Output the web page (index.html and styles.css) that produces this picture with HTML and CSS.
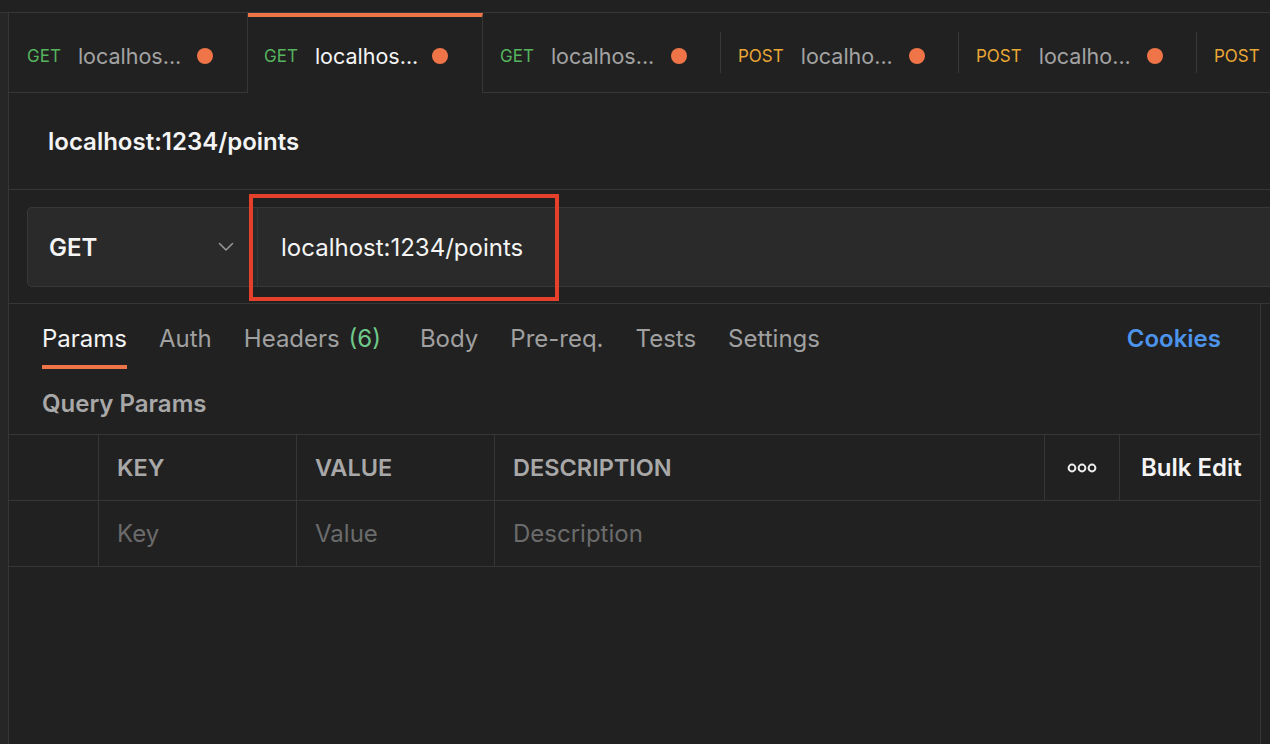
FILE: index.html
```html
<!DOCTYPE html>
<html lang="en">
<head>
<meta charset="utf-8">
<title>Postman request</title>
<link rel="stylesheet" href="styles.css">
</head>
<body>
<div class="topstrip"></div>
<div class="app">
  <div class="gutter"></div>
  <div class="main">
    <div class="tabs">
      <div class="tab tab-first"><span class="method get">GET</span><span class="name">localhos...</span><span class="dot"></span></div>
      <div class="tab active"><span class="method get">GET</span><span class="name">localhos...</span><span class="dot"></span></div>
      <div class="tab"><span class="method get">GET</span><span class="name">localhos...</span><span class="dot"></span></div>
      <span class="divider"></span>
      <div class="tab"><span class="method post">POST</span><span class="name">localho...</span><span class="dot"></span></div>
      <span class="divider"></span>
      <div class="tab"><span class="method post">POST</span><span class="name">localho...</span><span class="dot"></span></div>
      <span class="divider"></span>
      <div class="tab"><span class="method post">POST</span><span class="name">localho...</span><span class="dot"></span></div>
      <div class="tab-fill"></div>
    </div>

    <div class="title-bar"><h1 class="title">localhost:1234/points</h1></div>

    <div class="url-row">
      <div class="method-select">
        <span>GET</span>
        <svg class="chevron" width="16" height="10" viewBox="0 0 16 10"><path d="M1.5 1.5 L8 8 L14.5 1.5" fill="none" stroke="#9a9a9a" stroke-width="1.5" stroke-linecap="round" stroke-linejoin="round"/></svg>
      </div>
      <div class="url-input">localhost:1234/points</div>
      <div class="highlight"></div>
    </div>

    <div class="panel">
      <div class="req-tabs">
        <span class="rtab current">Params</span>
        <span class="rtab">Auth</span>
        <span class="rtab">Headers <span class="count">(6)</span></span>
        <span class="rtab">Body</span>
        <span class="rtab">Pre-req.</span>
        <span class="rtab">Tests</span>
        <span class="rtab">Settings</span>
        <span class="rtab cookies">Cookies</span>
      </div>
      <div class="section-label">Query Params</div>
      <div class="table">
        <div class="row head">
          <div class="cell"></div>
          <div class="cell">KEY</div>
          <div class="cell">VALUE</div>
          <div class="cell">DESCRIPTION</div>
          <div class="cell icon-cell">
            <svg width="30" height="10" viewBox="0 0 30 10"><circle cx="5" cy="5" r="3.4" fill="none" stroke="#ececec" stroke-width="2"/><circle cx="15" cy="5" r="3.4" fill="none" stroke="#ececec" stroke-width="2"/><circle cx="25" cy="5" r="3.4" fill="none" stroke="#ececec" stroke-width="2"/></svg>
          </div>
          <div class="cell bulk">Bulk Edit</div>
        </div>
        <div class="row body">
          <div class="cell"></div>
          <div class="cell ph">Key</div>
          <div class="cell ph">Value</div>
          <div class="cell ph">Description</div>
        </div>
      </div>
    </div>
  </div>
</div>
</body>
</html>
```

FILE: styles.css
```css
* { box-sizing: border-box; }
html, body { margin: 0; padding: 0; }
body {
  width: 1270px;
  height: 744px;
  overflow: hidden;
  background: #212121;
  font-family: Inter, "Noto Sans", sans-serif;
  color: #ececec;
}

.topstrip {
  height: 13px;
  border-bottom: 1px solid #363636;
}

.app {
  display: flex;
  height: 731px;
}

.gutter {
  width: 9px;
  flex: none;
  background: #262626;
  border-right: 1px solid #363636;
}

.main {
  flex: 1;
  min-width: 0;
  display: flex;
  flex-direction: column;
}

/* request tabs */
.tabs {
  display: flex;
  align-items: center;
  height: 80px;
  overflow: hidden;
  flex: none;
}
.tab {
  flex: none;
  width: 237px;
  height: 80px;
  display: flex;
  align-items: center;
  padding-top: 6px;
  padding-left: 17px;
  padding-right: 33px;
  border-bottom: 1px solid #363636;
}
.tab-first {
  width: 239px;
  border-right: 1px solid #363636;
  padding-left: 18px;
  padding-right: 34px;
}
.active {
  width: 235px;
  padding-top: 2px;
  border-bottom: none;
  border-top: 4px solid #ef7548;
  border-right: 1px solid #363636;
  padding-left: 16px;
  padding-right: 34px;
}
.tab-fill {
  flex: 1;
  height: 80px;
  border-bottom: 1px solid #363636;
}
.divider {
  flex: none;
  width: 1px;
  height: 80px;
  background: linear-gradient(#212121 19px, #383838 19px, #383838 60px, #212121 60px);
  border-bottom: 1px solid #363636;
}
.method {
  font-size: 17px;
  margin-right: 17px;
  flex: none;
}
.get { color: #56b35e; }
.post { color: #e9a736; }
.name {
  flex: 1;
  min-width: 0;
  font-size: 21.5px;
  color: #a3a3a3;
  white-space: nowrap;
  overflow: hidden;
}
.active .name { color: #f4f4f4; }
.dot {
  flex: none;
  width: 16px;
  height: 16px;
  border-radius: 50%;
  background: #ef7548;
}

/* title */
.title-bar {
  height: 97px;
  flex: none;
  display: flex;
  align-items: center;
  padding-left: 39px;
  border-bottom: 1px solid #363636;
}
.title {
  margin: 0;
  font-size: 24px;
  font-weight: 600;
  color: #f4f4f4;
}

/* url row */
.url-row {
  position: relative;
  height: 114px;
  flex: none;
  display: flex;
  padding: 17px 0 0 18px;
  border-bottom: 1px solid #363636;
}
.method-select {
  width: 230px;
  height: 80px;
  flex: none;
  display: flex;
  align-items: center;
  justify-content: space-between;
  padding: 0 23px 0 21px;
  background: #2a2a2a;
  border: 1px solid #383838;
  border-right: none;
  border-radius: 5px 0 0 5px;
  font-size: 24px;
  font-weight: 600;
  color: #f4f4f4;
}
.url-input {
  flex: 1;
  height: 80px;
  display: flex;
  align-items: center;
  padding-left: 23px;
  background: #2a2a2a;
  border: 1px solid #383838;
  border-right: none;
  font-size: 24px;
  color: #f4f4f4;
}
.highlight {
  position: absolute;
  left: 240px;
  top: 4px;
  width: 310px;
  height: 107px;
  border: 4px solid #e5402a;
}

/* panel */
.panel {
  width: 1252px;
  flex: 1;
  border-right: 1px solid #363636;
}
.req-tabs {
  display: flex;
  gap: 32px;
  padding: 0 39px 0 33px;
  height: 65px;
  align-items: flex-start;
}
.rtab {
  padding-top: 21px;
  height: 65px;
  line-height: 28px;
  font-size: 24px;
  color: #a0a0a0;
  border-bottom: 4px solid transparent;
  white-space: nowrap;
}
.rtab.current {
  color: #f4f4f4;
  border-bottom-color: #ef7548;
}
.count {
  color: #6fc98a;
  margin-left: 2px;
  margin-right: 7px;
}
.cookies {
  margin-left: auto;
  color: #4c93ea;
  font-weight: 600;
}
.section-label {
  padding: 21px 0 16px 33px;
  line-height: 28px;
  font-size: 24px;
  font-weight: 600;
  color: #a8a8a8;
}

.table {
  border-top: 1px solid #363636;
}
.row {
  display: grid;
  height: 66px;
  border-bottom: 1px solid #363636;
}
.row.head {
  grid-template-columns: 89px 198px 198px 550px 75px 1fr;
}
.row.body {
  grid-template-columns: 89px 198px 198px 1fr;
}
.cell {
  display: flex;
  align-items: center;
  padding-left: 18px;
  font-size: 24px;
}
.cell + .cell { border-left: 1px solid #363636; }
.head .cell {
  font-size: 23.5px;
  font-weight: 600;
  color: #a8a8a8;
}
.head .icon-cell {
  padding-left: 0;
  justify-content: center;
}
.head .bulk {
  color: #f4f4f4;
  font-size: 24px;
  padding-left: 21px;
}
.ph { color: #6b6b6b; }
```
